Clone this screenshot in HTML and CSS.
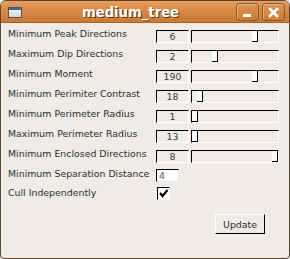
FILE: index.html
```html
<!DOCTYPE html>
<html>
<head>
  <title>medium_tree</title>
  <meta name="viewport" content="width=device-width, initial-scale=1.0">
  <link rel="stylesheet" href="styles.css">
</head>
<body>
  <div class="window">
    <div class="titlebar">
      <div class="app-icon"><div class="app-icon-bar"></div></div>
      <div class="title">medium_tree</div>
      <div class="tb-btn">
        <svg width="21" height="16" viewBox="0 0 21 16"><rect x="6" y="10" width="8" height="3" fill="#fff"/></svg>
      </div>
      <div class="tb-btn">
        <svg width="21" height="16" viewBox="0 0 21 16"><path d="M7 5 L14 12 M14 5 L7 12" stroke="#fff" stroke-width="2.6" stroke-linecap="square"/></svg>
      </div>
    </div>

    <div class="content">
      <div class="row">
        <div class="label">Minimum Peak Directions</div>
        <div class="value">6</div>
        <div class="trough"><div class="handle" style="margin-left:60px"></div></div>
      </div>
      <div class="row">
        <div class="label">Maximum Dip Directions</div>
        <div class="value">2</div>
        <div class="trough"><div class="handle" style="margin-left:20px"></div></div>
      </div>
      <div class="row">
        <div class="label">Minimum Moment</div>
        <div class="value">190</div>
        <div class="trough"><div class="handle" style="margin-left:60px"></div></div>
      </div>
      <div class="row">
        <div class="label">Minimum Perimiter Contrast</div>
        <div class="value">18</div>
        <div class="trough"><div class="handle" style="margin-left:5px"></div></div>
      </div>
      <div class="row">
        <div class="label">Minimum Perimeter Radius</div>
        <div class="value">1</div>
        <div class="trough"><div class="handle" style="margin-left:0px"></div></div>
      </div>
      <div class="row">
        <div class="label">Maximum Perimeter Radius</div>
        <div class="value">13</div>
        <div class="trough"><div class="handle" style="margin-left:0px"></div></div>
      </div>
      <div class="row">
        <div class="label">Minimum Enclosed Directions</div>
        <div class="value">8</div>
        <div class="trough"><div class="handle" style="margin-left:80px"></div></div>
      </div>
      <div class="row row-entry">
        <div class="label">Minimum Separation Distance</div>
        <div class="entry">4</div>
      </div>
      <div class="row">
        <div class="label">Cull Independently</div>
        <div class="check">
          <svg width="11" height="11" viewBox="0 0 11 11"><path d="M2 5 L4.5 8 L9.5 2" fill="none" stroke="#000" stroke-width="2.2"/></svg>
        </div>
      </div>
      <div class="actions">
        <button class="btn">Update</button>
      </div>
    </div>
  </div>
</body>
</html>
```

FILE: styles.css
```css
body { margin: 0; font-family: "DejaVu Sans", sans-serif; background: #efebe7; }
.window { width: 290px; height: 259px; box-sizing: border-box; border: 1px solid #5e4630; border-radius: 6px 6px 4px 4px; overflow: hidden; background: #efebe7; }

.titlebar { height: 22px; display: flex; align-items: center; padding: 0 4px 0 7px; background: linear-gradient(#e6a062, #d98b45 45%, #c97932); border-bottom: 1px solid #a8652a; box-sizing: border-box; }
.app-icon { width: 14px; height: 11px; box-sizing: border-box; border: 1px solid #555; background: linear-gradient(#fafafa, #d4d4d4); margin-top: 2px; }
.app-icon-bar { height: 2px; background: #3466a8; }
.title { flex: 1; text-align: center; padding-left: 6px; color: #fff; font-weight: bold; font-size: 13.2px; text-shadow: 1px 1px 0 #5a3614; margin-top: 1px; }
.tb-btn { width: 23px; height: 18px; box-sizing: border-box; border: 1px solid #8f5626; border-radius: 3px; margin-left: 3px; background: linear-gradient(#dc9656, #cc7d38); box-shadow: inset 1px 1px 0 #eab283; display: flex; align-items: center; justify-content: center; }

.content { padding: 5px 0 0 7px; font-size: 9.4px; color: #2e2e2e; }
.row { display: flex; height: 20px; }
.row-entry { height: 19px; }
.label { width: 148px; line-height: 11px; white-space: nowrap; }
.value { width: 33px; height: 13px; margin-top: 2px; box-sizing: border-box; border: 1px solid #fff; border-top-color: #000; border-left-color: #000; text-align: center; line-height: 11px; color: #3a3a3a; }
.trough { width: 88px; height: 13px; margin: 2px 0 0 2px; box-sizing: border-box; border: 1px solid #fff; border-top-color: #000; border-left-color: #000; display: flex; }
.handle { width: 6px; height: 11px; box-sizing: border-box; background: #fbfbfb; border-right: 1px solid #000; border-bottom: 1px solid #000; }
.entry { width: 23px; height: 13px; margin-top: 1px; box-sizing: border-box; border: 1px solid #e8e8e8; border-top-color: #000; border-left-color: #000; background: #fff; line-height: 11px; padding-left: 2px; color: #555; }
.check { width: 13px; height: 13px; margin-left: 1px; box-sizing: border-box; border: 1px solid #fff; border-top-color: #000; border-left-color: #000; background: #fff; display: flex; align-items: center; justify-content: center; }

.actions { display: flex; justify-content: flex-end; padding-right: 24px; margin-top: 7px; }
.btn { width: 50px; height: 20px; box-sizing: border-box; border: 1px solid #000; border-top-color: #fff; border-left-color: #fff; background: #efebe7; font-family: "DejaVu Sans", sans-serif; font-size: 9.4px; color: #2e2e2e; padding: 0; }
```
